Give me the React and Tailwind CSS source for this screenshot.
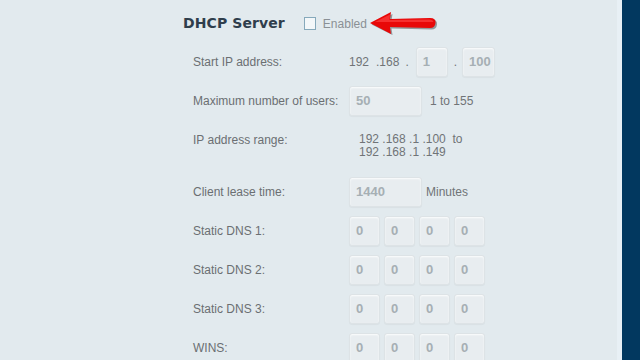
import React from "react";

const label = "w-[166px] shrink-0 pl-[10px] text-[12px] text-[#6b6f72]";
const plain = "text-[12px] text-[#707477]";

function Box({ value, w = "w-[31px]" }) {
  return (
    <div
      className={`${w} h-[30px] shrink-0 flex items-center pl-[6px] rounded-[3px] border border-[#dde3e6] bg-[#e8edf0] shadow-[inset_0_1px_2px_rgba(255,255,255,0.9),0_1px_1px_rgba(0,0,0,0.04)] text-[13px] font-bold text-[#a6afb4]`}
    >
      {value}
    </div>
  );
}

function Arrow() {
  return (
    <svg width="72" height="26" viewBox="0 0 72 26" className="ml-[2px]">
      <path
        d="M2.5 13.5 L23.5 3 L22.5 9.5 L62.5 8.5 Q68.5 8.5 68 13.5 Q67.5 18.5 62.5 18.5 L22.5 17.5 L23.5 24 Z"
        fill="#000"
        opacity="0.35"
      />
      <path
        d="M1 12 L22 1 L21 8 L61 7 Q67 7 66.5 12 Q66 17 61 17 L21 16 L22 23 Z"
        fill="#e80808"
      />
      <path d="M6 11 L21 3.5 L20.5 9 L60 8.5 Q64 8.5 64.5 11 Z" fill="#ff4a4a" opacity="0.6" />
    </svg>
  );
}

function Row({ name, children }) {
  return (
    <div className="flex items-center h-[30px] mb-[9px]">
      <div className={label}>{name}</div>
      {children}
    </div>
  );
}

function Quad() {
  return (
    <div className="flex gap-[4px]">
      <Box value="0" />
      <Box value="0" />
      <Box value="0" />
      <Box value="0" />
    </div>
  );
}

export default function App() {
  return (
    <div className="w-[640px] h-[360px] flex bg-[#02385f]">
      <div className="w-[617px] shrink-0 overflow-hidden bg-[#e2eaee] font-['Liberation_Sans',Arial,sans-serif]">
        <div className="ml-[183px]">
          {/* header */}
          <div className="h-[47px] flex items-center">
            <span className="font-['DejaVu_Sans',Verdana,sans-serif] font-bold text-[14px] text-[#2f3e4c] tracking-[0.1px]">
              DHCP Server
            </span>
            <div className="ml-[19px] w-[12px] h-[13px] border border-[#86a9bb] bg-[#f3f7f9]" />
            <span className="ml-[7px] text-[12px] text-[#8a9095]">Enabled</span>
            <Arrow />
          </div>

          <Row name="Start IP address:">
            <div className={`flex items-center ${plain}`}>
              <span>192</span>
              <span className="ml-[7px]">.168</span>
              <span className="ml-[6px] mr-[7px]">.</span>
              <Box value="1" w="w-[32px]" />
              <span className="ml-[6px] mr-[5px]">.</span>
              <Box value="100" w="w-[33px]" />
            </div>
          </Row>

          <Row name="Maximum number of users:">
            <Box value="50" w="w-[73px]" />
            <span className={`ml-[8px] ${plain}`}>1 to 155</span>
          </Row>

          <div className="flex items-start h-[43px] mb-[9px]">
            <div className={`${label} h-[30px] flex items-center`}>IP address range:</div>
            <div className={`pl-[10px] pt-[8px] leading-[13px] ${plain}`}>
              <div>192 .168 .1 .100&nbsp;&nbsp;to</div>
              <div>192 .168 .1 .149</div>
            </div>
          </div>

          <Row name="Client lease time:">
            <Box value="1440" w="w-[73px]" />
            <span className={`ml-[4px] ${plain}`}>Minutes</span>
          </Row>

          <Row name="Static DNS 1:">
            <Quad />
          </Row>
          <Row name="Static DNS 2:">
            <Quad />
          </Row>
          <Row name="Static DNS 3:">
            <Quad />
          </Row>
          <Row name="WINS:">
            <Quad />
          </Row>
        </div>
      </div>
      <div className="w-[5px] bg-[#e8f0f5]">&nbsp;</div>
      <div className="w-[18px] bg-[#02385f]">&nbsp;</div>
    </div>
  );
}
